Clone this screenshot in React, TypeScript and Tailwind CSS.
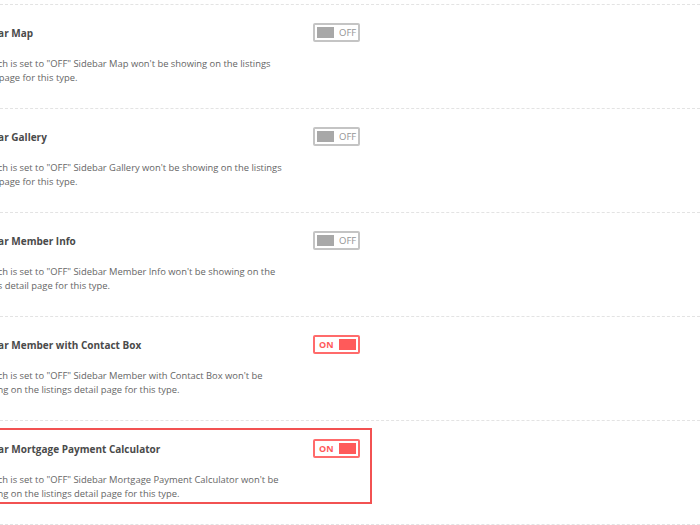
const rows = [
    {
        title: "Sidebar Map",
        lines: ['If switch is set to "OFF" Sidebar Map won\'t be showing on the listings', "detail page for this type."],
        on: false,
    },
    {
        title: "Sidebar Gallery",
        lines: ['If switch is set to "OFF" Sidebar Gallery won\'t be showing on the listings', "detail page for this type."],
        on: false,
    },
    {
        title: "Sidebar Member Info",
        lines: ['If switch is set to "OFF" Sidebar Member Info won\'t be showing on the', "listings detail page for this type."],
        on: false,
    },
    {
        title: "Sidebar Member with Contact Box",
        lines: ['If switch is set to "OFF" Sidebar Member with Contact Box won\'t be', "showing on the listings detail page for this type."],
        on: true,
    },
    {
        title: "Sidebar Mortgage Payment Calculator",
        lines: ['If switch is set to "OFF" Sidebar Mortgage Payment Calculator won\'t be', "showing on the listings detail page for this type."],
        on: true,
        highlight: true,
    },
];

function Toggle({ on }: { on: boolean }) {
    if (on) {
        return (
            <div className="mt-[9px] flex h-[19px] w-[47px] shrink-0 items-center justify-between rounded-[2px] border-2 border-[#ff6b6b] pl-[4px] pr-[2px]">
                <span className="text-[9px] font-bold leading-none text-[#ff5a5a]">ON</span>
                <span className="h-[11px] w-[17px] bg-[#ff5a5a]" />
            </div>
        );
    }
    return (
        <div className="mt-[9px] flex h-[19px] w-[47px] shrink-0 items-center gap-[5px] rounded-[2px] border-2 border-[#c4c4c4] pl-[2px]">
            <span className="h-[11px] w-[17px] bg-[#a8a8a8]" />
            <span className="text-[9.5px] leading-none text-[#949494]">OFF</span>
        </div>
    );
}

export default function App() {
    return (
        <div className="h-[525px] w-[700px] overflow-hidden bg-white pt-[4px]" style={{ fontFamily: '"Open Sans", "Noto Sans", sans-serif' }}>
            <div className="border-t border-dashed border-[#e3e3e3]">
                {rows.map((row) => (
                    <div key={row.title} className="h-[104px] border-b border-dashed border-[#e3e3e3] pt-[7px]">
                        <div
                            className={
                                "ml-[-40px] flex h-[76px] w-[412px] border-2 " +
                                (row.highlight ? "border-[#f25252]" : "border-transparent")
                            }
                        >
                            <div className="w-[351px] shrink-0 pl-[9px] pt-[10px]">
                                <div className="text-[10px] font-bold leading-[18px] text-[#4a4a4a]">{row.title}</div>
                                <div className="ml-[1px] mt-[15px] whitespace-nowrap text-[9.4px] leading-[14px] text-[#666]">
                                    {row.lines[0]}
                                    <br />
                                    {row.lines[1]}
                                </div>
                            </div>
                            <Toggle on={row.on} />
                        </div>
                    </div>
                ))}
            </div>
        </div>
    );
}
